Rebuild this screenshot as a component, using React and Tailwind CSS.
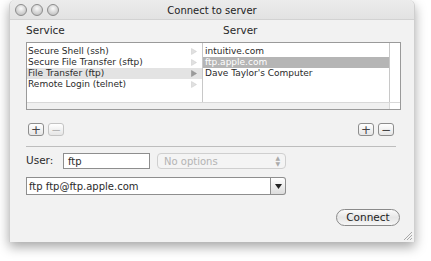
import React from "react";

const font = { fontFamily: '"DejaVu Sans", "Liberation Sans", sans-serif' };

const services = [
  { name: "Secure Shell (ssh)" },
  { name: "Secure File Transfer (sftp)" },
  { name: "File Transfer (ftp)", selected: true },
  { name: "Remote Login (telnet)" },
];

const servers = [
  { name: "intuitive.com" },
  { name: "ftp.apple.com", selected: true },
  { name: "Dave Taylor's Computer" },
];

function Light() {
  return (
    <span className="w-[12px] h-[12px] rounded-full border border-[#8c8c8c] bg-[radial-gradient(circle_at_50%_35%,#fafafa,#c9c9c9_70%,#b0b0b0)]" />
  );
}

function SmallButton({ children, dim }) {
  return (
    <button
      className={`w-[16px] h-[13px] rounded-[3px] border flex items-center justify-center bg-gradient-to-b from-white to-[#e6e6e6] text-[12px] leading-none ${
        dim ? "border-[#c4c4c4] text-[#b5b5b5]" : "border-[#8d8d8d] text-[#444]"
      }`}
    >
      {children}
    </button>
  );
}

function Arrow({ dark }) {
  return (
    <svg width="6" height="7" viewBox="0 0 6 7">
      <path d="M0.5 0.5 L5.5 3.5 L0.5 6.5 Z" fill={dark ? "#9a9a9a" : "#e0e0e0"} stroke={dark ? "#8a8a8a" : "#c8c8c8"} strokeWidth="0.5" />
    </svg>
  );
}

export default function App() {
  return (
    <div className="w-[431px] h-[261px] bg-white overflow-hidden text-[#2a2a2a]" style={font}>
      <div className="ml-[9px] w-[406px] h-[242px] rounded-t-[6px] bg-[#f2f2f2] flex flex-col shadow-[0_5px_12px_rgba(0,0,0,0.35)] border-x border-[#cfcfcf]">
        {/* Title bar */}
        <div className="h-[20px] flex items-center relative bg-gradient-to-b from-[#ececec] to-[#e2e2e2] border-b border-[#d2d2d2] rounded-t-[6px]">
          <div className="flex gap-[4px] pl-[5px]">
            <Light />
            <Light />
            <Light />
          </div>
          <div className="absolute inset-0 flex items-center justify-center text-[10px] text-[#222] pt-[1px]">
            Connect to server
          </div>
        </div>

        <div className="pl-[16px] pr-[15px] flex flex-col">
          {/* Labels */}
          <div className="h-[22px] flex items-end pb-[3px] text-[10.5px]">
            <span className="w-[197px]">Service</span>
            <span>Server</span>
          </div>

          {/* Browser */}
          <div className="w-[375px] h-[68px] border border-[#9a9a9a] bg-white flex flex-col">
            <div className="flex flex-1">
              <div className="w-[176px] pt-[3px] border-r border-[#c8c8c8]">
                {services.map((s) => (
                  <div
                    key={s.name}
                    className={`h-[11px] flex items-center justify-between pl-[1px] pr-[5px] text-[9px] leading-none ${
                      s.selected ? "bg-[#e3e3e3]" : ""
                    }`}
                  >
                    <span>{s.name}</span>
                    <Arrow dark={s.selected} />
                  </div>
                ))}
              </div>
              <div className="w-[187px] pt-[3px] border-r border-[#c8c8c8]">
                {servers.map((s) => (
                  <div
                    key={s.name}
                    className={`h-[11px] flex items-center pl-[2px] text-[9px] leading-none ${
                      s.selected ? "bg-[#b5b5b5] text-white" : ""
                    }`}
                  >
                    {s.name}
                  </div>
                ))}
              </div>
              <div className="flex-1" />
            </div>
            <div className="h-[7px] bg-[#f0f0f0] border-t border-[#d8d8d8] flex">
              <div className="w-[362px]" />
              <div className="flex-1 bg-white border-l border-[#d8d8d8]" />
            </div>
          </div>

          {/* +/- */}
          <div className="mt-[13px] flex justify-between pl-[2px] pr-[5px]">
            <div className="flex gap-[4px]">
              <SmallButton>+</SmallButton>
              <SmallButton dim>−</SmallButton>
            </div>
            <div className="flex gap-[4px]">
              <SmallButton>+</SmallButton>
              <SmallButton>−</SmallButton>
            </div>
          </div>

          {/* Separator */}
          <div className="mt-[10px] w-[370px] border-t border-[#bdbdbd]" />

          {/* User row */}
          <div className="mt-[6px] flex items-center text-[10.5px]">
            <span className="w-[37px]">User:</span>
            <div className="w-[87px] h-[16px] border border-[#8e8e8e] bg-white flex items-center pl-[4px] text-[10px]">
              ftp
            </div>
            <div className="ml-[7px] w-[129px] h-[16px] rounded-[4px] border border-[#cfcfcf] bg-[#f4f4f4] flex items-center justify-between pl-[6px] pr-[5px] text-[10px] text-[#b3b3b3]">
              <span>No options</span>
              <span className="text-[6px] leading-[6px] flex flex-col text-[#aaa]">
                <span>▲</span>
                <span>▼</span>
              </span>
            </div>
          </div>

          {/* Combo */}
          <div className="mt-[8px] w-[260px] h-[18px] flex">
            <div className="flex-1 border border-[#8e8e8e] bg-white flex items-center pl-[2px] text-[10px]">
              ftp ftp@ftp.apple.com
            </div>
            <div className="w-[15px] border border-[#8e8e8e] border-l-0 rounded-r-[3px] bg-gradient-to-b from-white to-[#dcdcdc] flex items-center justify-center">
              <svg width="7" height="5" viewBox="0 0 7 5">
                <path d="M0 0 L7 0 L3.5 5 Z" fill="#222" />
              </svg>
            </div>
          </div>

          {/* Connect */}
          <div className="mt-[14px] flex justify-end">
            <button className="mr-[-1px] w-[64px] h-[17px] rounded-full border border-[#8a8a8a] bg-gradient-to-b from-[#fbfbfb] via-[#e6e6e6] to-[#f6f6f6] text-[10.5px] text-[#222] flex items-center justify-center">
              Connect
            </button>
          </div>

          {/* Resize grip */}
          <div className="mt-[4px] flex justify-end mr-[-14px]">
            <svg width="11" height="11" viewBox="0 0 11 11">
              <path d="M10 2 L2 10 M10 5 L5 10 M10 8 L8 10" stroke="#a8a8a8" strokeWidth="1" />
            </svg>
          </div>
        </div>
      </div>
    </div>
  );
}
